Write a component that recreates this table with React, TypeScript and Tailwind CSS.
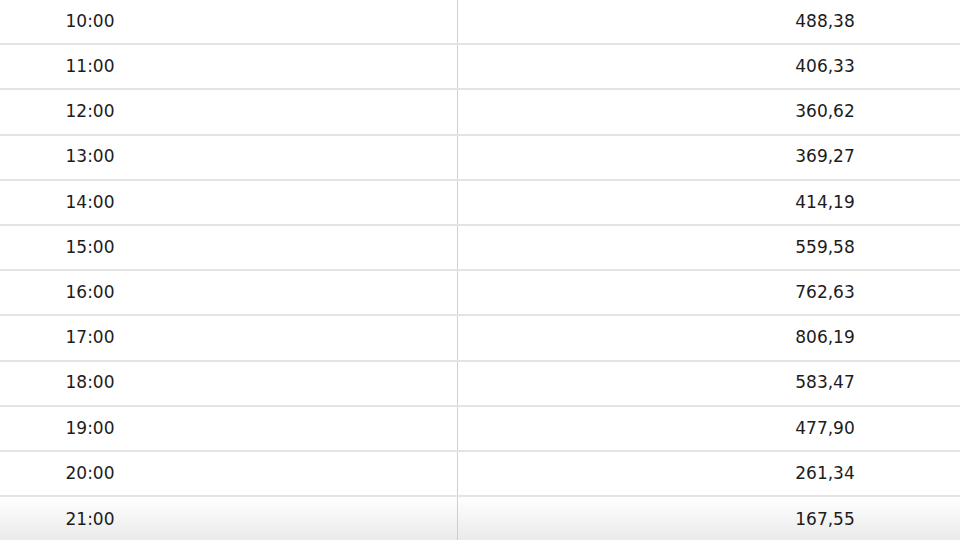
import React from 'react';

const rows = [
  ['10:00', '488,38'],
  ['11:00', '406,33'],
  ['12:00', '360,62'],
  ['13:00', '369,27'],
  ['14:00', '414,19'],
  ['15:00', '559,58'],
  ['16:00', '762,63'],
  ['17:00', '806,19'],
  ['18:00', '583,47'],
  ['19:00', '477,90'],
  ['20:00', '261,34'],
  ['21:00', '167,55'],
];

export default function App() {
  return (
    <div className="w-[960px] h-[540px] overflow-hidden bg-white text-[17px] text-[#1c1c1c]" style={{ fontFamily: '"DejaVu Sans", sans-serif' }}>
      {rows.map(([time, value], i) => {
        const last = i === rows.length - 1;
        return (
          <div
            key={time}
            className={`flex h-[45.2px] ${last ? 'bg-gradient-to-b from-white to-[#e9e9e9]' : 'border-b-2 border-[#e4e4e4]'}`}
          >
            <div className="w-[458px] shrink-0 flex items-center border-r-[1.5px] border-[#cfcfcf]">
              <div className="w-[180px] text-center">{time}</div>
            </div>
            <div className="flex-1 flex items-center justify-end">
              <div className="w-[270px] text-center">{value}</div>
            </div>
          </div>
        );
      })}
    </div>
  );
}
